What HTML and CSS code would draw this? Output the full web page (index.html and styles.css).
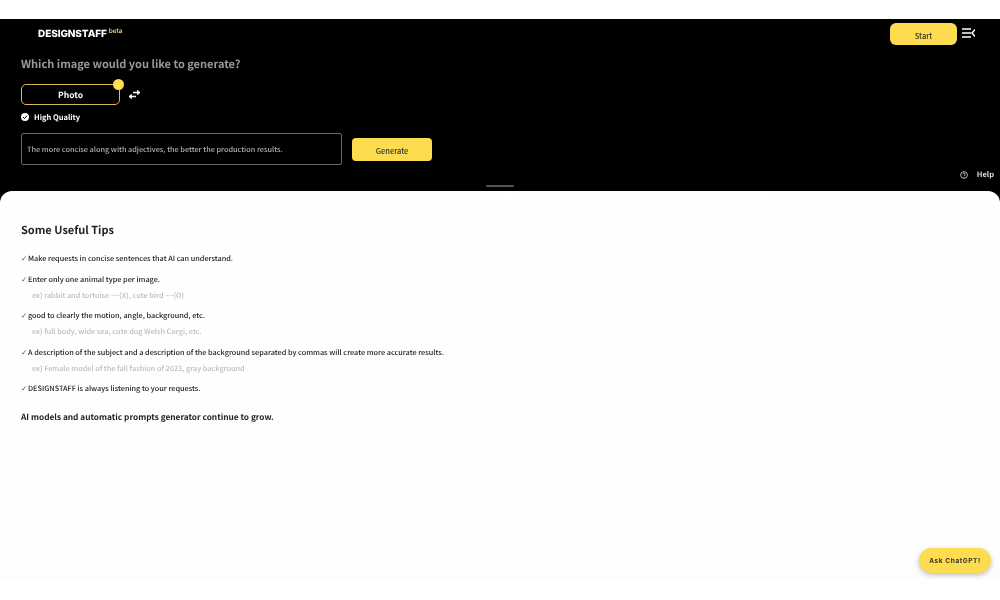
FILE: index.html
```html
<!DOCTYPE html>
<html lang="en">
<head>
<meta charset="utf-8">
<title>DESIGNSTAFF</title>
<link rel="stylesheet" href="styles.css">
</head>
<body>
<div class="topgap"></div>
<main class="app">
  <section class="hero">
    <header class="nav">
      <div class="logo">DESIGNSTAFF<sup class="beta">beta</sup></div>
      <div class="nav-right">
        <button class="btn start">Start</button>
        <svg class="menu" width="13" height="10" viewBox="0 0 13 10"><path d="M0 1h9M0 5h9M0 9h9M13 1.500 10 5 13 8.500" fill="none" stroke="#fff" stroke-width="1.500"/></svg>
      </div>
    </header>
    <h1 class="question">Which image would you like to generate?</h1>
    <div class="type-row">
      <div class="type-box">Photo<span class="dot"><svg width="8" height="8" viewBox="0 0 8 8"><path d="M1.500 4 3.300 5.700 6.500 2.300" fill="none" stroke="#ffe98a" stroke-width="1"/></svg></span></div>
      <svg class="swap" width="11" height="9" viewBox="0 0 11 9"><path d="M4 2.500H10.500M8.200 0.500 10.500 2.500 8.200 4.500" fill="none" stroke="#fff" stroke-width="1.300"/><path d="M7 6.500H.5M2.800 4.500 .5 6.500 2.800 8.500" fill="none" stroke="#fff" stroke-width="1.300"/></svg>
    </div>
    <div class="quality">
      <svg width="8" height="8" viewBox="0 0 8 8"><circle cx="4" cy="4" r="4" fill="#fff"/><path d="M2 4 3.500 5.500 6 2.700" fill="none" stroke="#000" stroke-width="1"/></svg>
      <span>High Quality</span>
    </div>
    <div class="prompt-row">
      <div class="prompt">The more concise along with adjectives, the better the production results.</div>
      <button class="btn generate">Generate</button>
    </div>
    <div class="help">
      <svg width="8" height="8" viewBox="0 0 8 8"><circle cx="4" cy="4" r="3.400" fill="none" stroke="#ddd" stroke-width=".8"/><path d="M2.800 3.200C2.800 1.800 5.200 1.800 5.200 3.200 5.200 4.100 4 4 4 5.100M4 5.800V6.500" fill="none" stroke="#ddd" stroke-width=".8"/></svg>
      <span>Help</span>
    </div>
    <div class="handle"></div>
  </section>
  <section class="tips">
    <h2 class="tips-title">Some Useful Tips</h2>
    <ul class="tip-list">
      <li class="tip">Make requests in concise sentences that AI can understand.</li>
      <li class="tip">Enter only one animal type per image.<p class="example">ex) rabbit and tortoise ~~(X), cute bird ~~(O)</p></li>
      <li class="tip">good to clearly the motion, angle, background, etc.<p class="example">ex) full body, wide sea, cute dog Welsh Corgi, etc.</p></li>
      <li class="tip">A description of the subject and a description of the background separated by commas will create more accurate results.<p class="example">ex) Female model of the fall fashion of 2023, gray background</p></li>
      <li class="tip">DESIGNSTAFF is always listening to your requests.</li>
    </ul>
    <p class="closing">AI models and automatic prompts generator continue to grow.</p>
    <button class="ask">Ask ChatGPT!</button>
  </section>
</main>
</body>
</html>
```
FILE: styles.css
```css
* { box-sizing: border-box; }
html, body { margin: 0; height: 100%; background: #fff; overflow: hidden; }
body { font-family: "Noto Sans CJK KR", "Noto Sans", sans-serif; text-rendering: geometricPrecision; }
.topgap { height: 19px; }
.app { height: 561px; background: #000; display: flex; flex-direction: column; }
.hero { height: 172px; padding: 0 6px 0 21px; position: relative; color: #fff; flex: none; will-change: transform; }
.nav { height: 26px; display: flex; justify-content: space-between; align-items: flex-start; }
.logo { font-family: Inter, sans-serif; font-weight: 800; font-size: 10px; margin: 9px 0 0 17px; line-height: 12px; letter-spacing: -.1px; }
.beta { color: #f5d24a; font-size: 6.500px; font-weight: 600; margin-left: 2px; vertical-align: 4px; line-height: 0; }
.nav-right { display: flex; align-items: center; gap: 5px; margin: 4px 19px 0 0; }
.btn { border: 0; background: #fddc4f; color: #333; font-family: inherit; font-size: 7.500px; font-weight: 500; padding: 0; }
.start { width: 67px; height: 22px; border-radius: 6px; padding-top: 2px; }
.menu { margin-top: -2px; }
.question { margin: 10px 0 0; font-size: 11px; line-height: 18px; font-weight: 700; color: #9a9a9a; }
.type-row { display: flex; align-items: center; gap: 9px; margin-top: 11px; }
.type-box { width: 99px; height: 21px; border: 1.500px solid #d9bb50; border-radius: 5px; position: relative; display: flex; align-items: center; justify-content: center; font-size: 8.500px; font-weight: 700; }
.dot { position: absolute; top: -6px; right: -5px; width: 11px; height: 11px; background: #fddc4f; border-radius: 50%; display: flex; align-items: center; justify-content: center; }
.quality { display: flex; align-items: center; gap: 5px; margin-top: 6px; height: 12px; font-size: 7.500px; font-weight: 700; }
.prompt-row { display: flex; align-items: center; gap: 10px; margin-top: 10px; }
.prompt { width: 321px; height: 32px; border: 1px solid #666; border-radius: 2px; padding: 1px 5px 0; display: flex; align-items: center; font-size: 7.300px; font-weight: 500; color: #b0b0b0; }
.generate { width: 80px; height: 23px; border-radius: 4px; padding-top: 2px; }
.help { position: absolute; right: 6px; top: 150px; display: flex; align-items: center; gap: 9px; font-size: 7.500px; font-weight: 700; color: #ddd; }
.handle { position: absolute; left: 486px; top: 166px; width: 28px; height: 2px; background: #555; border-radius: 1px; }
.tips { flex: 1; position: relative; background: linear-gradient(#fff, #fdfdfd); border-radius: 12px 12px 0 0; padding: 30px 21px 0; color: #222; will-change: transform; }
.tips-title { margin: 0; font-size: 11px; line-height: 18px; font-weight: 700; }
.tip-list { list-style: none; margin: 15px 0 0; padding: 0; }
.tip { font-size: 7.300px; font-weight: 500; line-height: 11px; margin-bottom: 9.500px; }
.tip::before { content: "\2713"; display: inline-block; width: 7px; line-height: 1px; font-family: "DejaVu Sans", sans-serif; font-size: 7.500px; color: #555; }
.example { margin: 5px 0 0 11px; color: #bbb; }
.closing { margin: 14.500px 0 0; font-size: 8.300px; line-height: 14px; font-weight: 700; }
.ask { position: absolute; right: 9px; bottom: 7px; width: 72px; height: 25px; border: 0; border-radius: 13px; background: #fddc4f; box-shadow: 0 2px 5px rgba(0,0,0,.25); font-family: Inter, sans-serif; font-size: 6.500px; font-weight: 700; letter-spacing: .6px; color: #333; padding: 0; }
```
